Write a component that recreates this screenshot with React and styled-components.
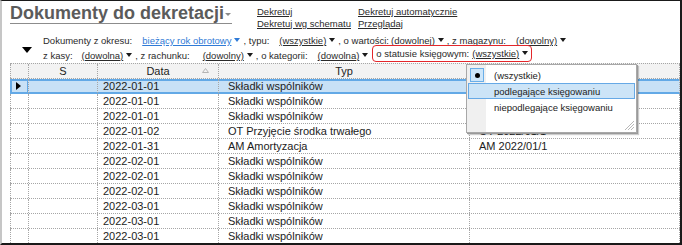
import styled, { createGlobalStyle } from "styled-components";

const GlobalStyle = createGlobalStyle`
  html, body {
    margin: 0;
    padding: 0;
    background: #fff;
  }
  body {
    font-family: "Liberation Sans", Arial, sans-serif;
    color: #222;
  }
`;

const rows = [
  { date: "2022-01-01", type: "Składki wspólników", no: "", selected: true },
  { date: "2022-01-01", type: "Składki wspólników", no: "" },
  { date: "2022-01-01", type: "Składki wspólników", no: "" },
  { date: "2022-01-02", type: "OT Przyjęcie środka trwałego", no: "OT 2022/01/1" },
  { date: "2022-01-31", type: "AM Amortyzacja", no: "AM 2022/01/1" },
  { date: "2022-02-01", type: "Składki wspólników", no: "" },
  { date: "2022-02-01", type: "Składki wspólników", no: "" },
  { date: "2022-02-01", type: "Składki wspólników", no: "" },
  { date: "2022-03-01", type: "Składki wspólników", no: "" },
  { date: "2022-03-01", type: "Składki wspólników", no: "" },
  { date: "2022-03-01", type: "Składki wspólników", no: "" },
];

const menuItems = [
  { label: "(wszystkie)", checked: true },
  { label: "podlegające księgowaniu", hover: true },
  { label: "niepodlegające księgowaniu" },
];

function App() {
  return (
    <>
      <GlobalStyle />
      <Frame>
        <Header>
          <TitleCell>
            <TitleWrap>
              <Title>Dokumenty do dekretacji</Title>
              <TitleCaret />
            </TitleWrap>
          </TitleCell>
          <LinkColumn>
            <ActionLink>Dekretuj</ActionLink>
            <ActionLink>Dekretuj wg schematu</ActionLink>
          </LinkColumn>
          <LinkColumn>
            <ActionLink>Dekretuj automatycznie</ActionLink>
            <ActionLink>Przeglądaj</ActionLink>
          </LinkColumn>
        </Header>

        <Filters>
          <Gutter />
          <FilterRow>
            <Label>Dokumenty z okresu:</Label>
            <Value $gap={10} $blue>bieżący rok obrotowy</Value>
            <Caret $blue />
            <Label $lead={3}>, typu:</Label>
            <Value $gap={10}>(wszystkie)</Value>
            <Caret />
            <Label $lead={3}>, o wartości:</Label>
            <Value $gap={2}>(dowolnej)</Value>
            <Caret />
            <Label $lead={3}>, z magazynu:</Label>
            <Value $gap={10}>(dowolny)</Value>
            <Caret />
          </FilterRow>
          <Gutter>
            <BigCaret />
          </Gutter>
          <FilterRow>
            <Label>z kasy:</Label>
            <Value $gap={9}>(dowolna)</Value>
            <Caret />
            <Label $lead={3}>, z rachunku:</Label>
            <Value $gap={13}>(dowolny)</Value>
            <Caret />
            <Label $lead={3}>, o kategorii:</Label>
            <Value $gap={10}>(dowolna)</Value>
            <Caret />
            <StatusBox>
              <Label>o statusie księgowym:</Label>
              <Value $gap={3}>(wszystkie)</Value>
              <Caret />
            </StatusBox>
          </FilterRow>
        </Filters>

        <Grid>
          <HeadRow>
            <HeadCell />
            <HeadCell>S</HeadCell>
            <HeadCell>
              Data
              <SortMark width="7" height="5" viewBox="0 0 7 5">
                <path d="M0.5 4.5 L3.5 0.5 L6.5 4.5 Z" fill="none" stroke="#b4b4b4" strokeWidth="1" />
              </SortMark>
            </HeadCell>
            <HeadCell>Typ</HeadCell>
            <HeadCell>Numer</HeadCell>
          </HeadRow>
          {rows.map((r, i) => (
            <Row key={i} $selected={r.selected}>
              <SelectorCell $selected={r.selected}>
                {r.selected && <RowPointer />}
              </SelectorCell>
              <Cell />
              <Cell $pad={5}>{r.date}</Cell>
              <Cell $pad={9}>{r.type}</Cell>
              <Cell $pad={9}>{r.no}</Cell>
            </Row>
          ))}
        </Grid>

        <Menu>
          {menuItems.map((m) => (
            <MenuItem key={m.label} $hover={m.hover}>
              <CheckSlot>{m.checked && <CheckBox><Dot /></CheckBox>}</CheckSlot>
              {m.label}
            </MenuItem>
          ))}
          <Grip width="12" height="12" viewBox="0 0 12 12">
            <path d="M11 2 L2 11 M11 5 L5 11 M11 8 L8 11" stroke="#b8b8b8" strokeWidth="1" />
          </Grip>
        </Menu>
      </Frame>
    </>
  );
}

const Frame = styled.div`
  position: relative;
  width: 682px;
  height: 245px;
  box-sizing: border-box;
  border-top: 1px solid #1a1a1a;
  border-right: 2px solid #1a1a1a;
  border-bottom: 2px solid #1a1a1a;
  border-left: 2px solid #c6c6c6;
  overflow: hidden;
  background: #fff;
`;

const Header = styled.div`
  display: grid;
  grid-template-columns: 255px 101px 1fr;
  height: 32px;
`;

const TitleCell = styled.div`
  padding: 2px 0 0 8px;
`;

const TitleWrap = styled.div`
  display: flex;
  align-items: center;
  width: 222px;
  height: 20px;
  border-bottom: 1px solid #8c8c8c;
`;

const Title = styled.span`
  font-size: 18px;
  font-weight: bold;
  line-height: 20px;
  color: #5b5b5b;
  white-space: nowrap;
`;

const TitleCaret = styled.span`
  margin-left: 1px;
  margin-top: 2px;
  width: 0;
  height: 0;
  border-left: 3px solid transparent;
  border-right: 3px solid transparent;
  border-top: 3px solid #8a8a8a;
`;

const LinkColumn = styled.div`
  display: flex;
  flex-direction: column;
  padding-top: 5px;
`;

const ActionLink = styled.span`
  font-size: 9.5px;
  line-height: 11.5px;
  color: #2a2a2a;
  text-decoration: underline;
  white-space: nowrap;
`;

const Filters = styled.div`
  display: grid;
  grid-template-columns: 41px 1fr;
  grid-auto-rows: 15px;
`;

const Gutter = styled.div`
  display: flex;
  padding-left: 20px;
`;

const BigCaret = styled.span`
  margin-top: -1px;
  width: 0;
  height: 0;
  border-left: 5px solid transparent;
  border-right: 5px solid transparent;
  border-top: 6px solid #000;
`;

const FilterRow = styled.div`
  display: flex;
  align-items: flex-start;
  font-size: 9.5px;
  line-height: 15px;
  white-space: nowrap;
  color: #2a2a2a;
`;

const Label = styled.span`
  margin-left: ${(p) => p.$lead || 0}px;
`;

const Value = styled.span`
  margin-left: ${(p) => p.$gap}px;
  color: ${(p) => (p.$blue ? "#2f7ad6" : "#2a2a2a")};
  text-decoration: underline;
`;

const Caret = styled.span`
  margin: 5px 0 0 3px;
  width: 0;
  height: 0;
  border-left: 3.5px solid transparent;
  border-right: 3.5px solid transparent;
  border-top: 4px solid ${(p) => (p.$blue ? "#2f7ad6" : "#1a1a1a")};
`;

const StatusBox = styled.div`
  display: flex;
  align-items: flex-start;
  margin: -3px 0 0 4px;
  padding: 0 3px 0 3px;
  height: 17px;
  box-sizing: border-box;
  border: 1.5px solid #e3262a;
  border-radius: 4px;
  line-height: 15px;

  ${Caret} {
    margin-top: 4.5px;
  }
`;

const columns = "18px 69px 121px 251px 211px";

const Grid = styled.div`
  margin-left: 8px;
  width: 670px;
  font-size: 11px;
  color: #1c1c1c;
`;

const HeadRow = styled.div`
  display: grid;
  grid-template-columns: ${columns};
  height: 16px;
  box-sizing: border-box;
  border-top: 1px dotted #a6a6a6;
  border-bottom: 1px dotted #a6a6a6;
  background: #f3f3f3;
`;

const HeadCell = styled.div`
  position: relative;
  display: flex;
  align-items: center;
  justify-content: center;
  border-left: 1px dotted #a6a6a6;
  line-height: 14px;

  &:last-child {
    border-right: 1px dotted #a6a6a6;
  }
`;

const SortMark = styled.svg`
  position: absolute;
  right: 9px;
  top: 4px;
`;

const Row = styled.div`
  display: grid;
  grid-template-columns: ${columns};
  height: 15px;
  box-sizing: border-box;
  border-bottom: 1px dotted #a6a6a6;
  background: ${(p) => (p.$selected ? "#c8e1f6" : "#fff")};
  box-shadow: ${(p) =>
    p.$selected ? "inset 0 2px 0 #63a9e6, inset 0 -1px 0 #63a9e6" : "none"};
  ${(p) => p.$selected && "border-bottom: 1px solid #63a9e6;"}
`;

const Cell = styled.div`
  display: flex;
  align-items: center;
  padding-left: ${(p) => p.$pad || 0}px;
  border-left: 1px dotted #a6a6a6;
  white-space: nowrap;
  overflow: hidden;
  line-height: 14px;

  &:last-child {
    border-right: 1px dotted #a6a6a6;
  }
`;

const SelectorCell = styled(Cell)`
  padding-left: 4px;
  ${(p) => p.$selected && "border-left: 2px solid #63a9e6; border-right: 1px solid #63a9e6;"}
`;

const RowPointer = styled.span`
  width: 0;
  height: 0;
  border-top: 4.5px solid transparent;
  border-bottom: 4.5px solid transparent;
  border-left: 5px solid #000;
`;

const Menu = styled.div`
  position: absolute;
  left: 464px;
  top: 63px;
  width: 171px;
  height: 69px;
  box-sizing: border-box;
  padding: 2px 1px;
  border: 1px solid #a8a8a8;
  background: linear-gradient(to right, #f0f0f0 19px, #fff 19px);
  box-shadow: 1px 1px 0 #9a9a9a, 2px 2px 1px rgba(0, 0, 0, 0.2);
  font-size: 9.5px;
  color: #222;
`;

const MenuItem = styled.div`
  display: grid;
  grid-template-columns: 25px 1fr;
  align-items: center;
  height: 16px;
  box-sizing: border-box;
  border: 1px solid ${(p) => (p.$hover ? "#66a9e6" : "transparent")};
  background: ${(p) => (p.$hover ? "#cce4f7" : "transparent")};
  white-space: nowrap;
`;

const CheckSlot = styled.div`
  display: flex;
  align-items: center;
  padding-left: 1px;
`;

const CheckBox = styled.span`
  display: flex;
  align-items: center;
  justify-content: center;
  width: 14px;
  height: 14px;
  box-sizing: border-box;
  border: 1px solid #6aaee8;
  background: #cde6fa;
`;

const Dot = styled.span`
  width: 5px;
  height: 5px;
  border-radius: 50%;
  background: #000;
`;

const Grip = styled.svg`
  position: absolute;
  right: 1px;
  bottom: 1px;
`;

export default App;
